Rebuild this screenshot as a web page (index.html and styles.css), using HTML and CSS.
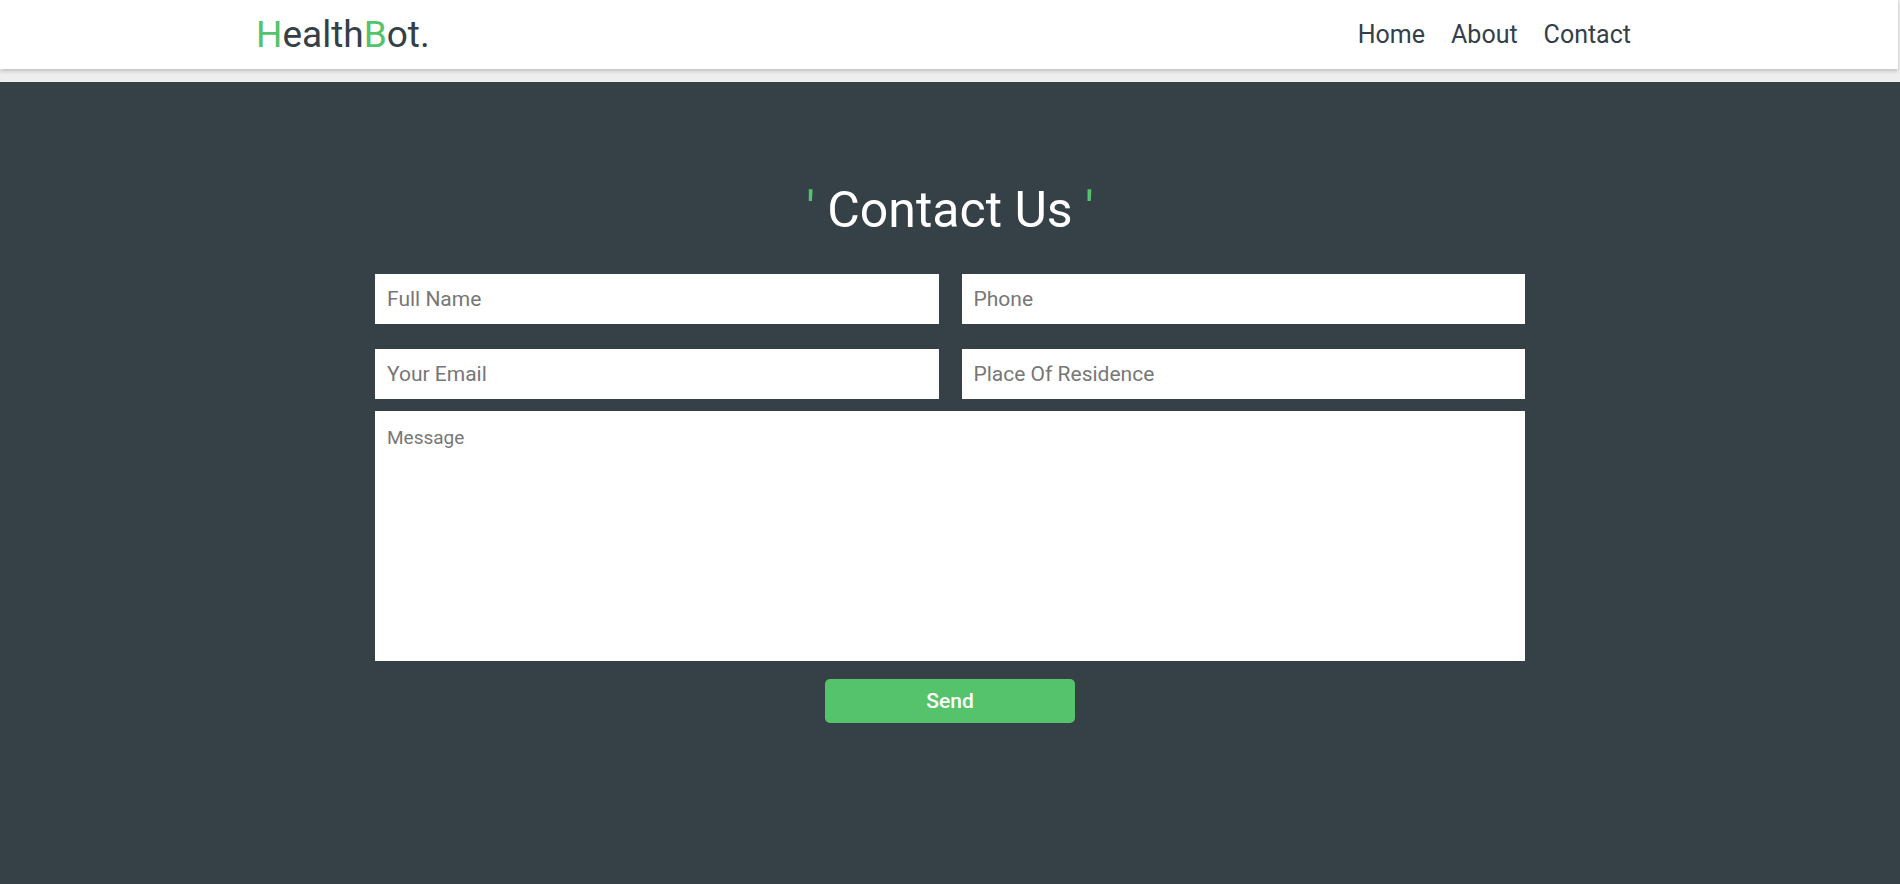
FILE: index.html
```html
<!DOCTYPE html>
<html lang="en">
<head>
    <meta charset="UTF-8">
    <meta name="viewport" content="width=device-width, initial-scale=1.0">
    <title>HealthBot - Contact</title>
    <link rel="stylesheet" href="styles.css">
</head>
<body>

    <header class="header">
        <div class="container header-inner">
            <a class="logo" href="#"><span class="green">H</span>ealth<span class="green">B</span>ot.</a>
            <nav class="nav">
                <a href="#">Home</a>
                <a href="#">About</a>
                <a href="#">Contact</a>
            </nav>
        </div>
    </header>

    <section class="contact">
        <h1 class="contact-title"><span class="green">'</span> Contact Us <span class="green">'</span></h1>

        <form class="contact-form">
            <div class="row">
                <input type="text" placeholder="Full Name">
                <input type="text" placeholder="Phone">
            </div>
            <div class="row">
                <input type="email" placeholder="Your Email">
                <input type="text" placeholder="Place Of Residence">
            </div>
            <textarea placeholder="Message"></textarea>
            <button type="button" class="send">Send</button>
        </form>
    </section>

</body>
</html>
```

FILE: styles.css
```css
* {
    box-sizing: border-box;
}

body {
    font-family: Roboto, "Liberation Sans", sans-serif;
    background: #eeeeee;
    margin: 0;
    padding: 0;
}

.green {
    color: #55c36b;
}

.container {
    max-width: 1420px;
    margin: 0 auto;
    padding: 0 15px;
}

.header {
    background: white;
    height: 69px;
    margin-right: 2px;
    margin-bottom: 13px;
    box-shadow: 0 2px 4px rgba(0,0,0,0.2);
}

.header-inner {
    display: flex;
    align-items: center;
    justify-content: space-between;
    height: 100%;
}

.logo {
    font-size: 37px;
    color: #343f48;
    text-decoration: none;
    margin-left: 2px;
}

.nav {
    display: flex;
}

.nav a {
    font-size: 25px;
    color: #343f48;
    text-decoration: none;
    padding: 0 13px;
}

.contact {
    background: #364047;
    padding: 99px 0 162px;
}

.contact-title {
    margin: 0 0 35px;
    font-size: 50px;
    font-weight: 400;
    color: white;
    text-align: center;
    line-height: normal;
}

.contact-form {
    width: 1150px;
    margin: 0 auto;
    display: flex;
    flex-direction: column;
    align-items: center;
}

.row {
    width: 100%;
    display: grid;
    grid-template-columns: 1fr 1fr;
    column-gap: 23px;
    margin-bottom: 25px;
}

.row + .row {
    margin-bottom: 12px;
}

input, textarea {
    font-family: inherit;
    border: none;
    outline: none;
    background: white;
    color: #333;
}

input {
    font-size: 21px;
    height: 50px;
    padding: 0 12px;
}

textarea {
    display: block;
    width: 100%;
    height: 250px;
    font-size: 19px;
    padding: 15px 12px;
    resize: none;
    margin-bottom: 18px;
}

input::placeholder, textarea::placeholder {
    color: #777;
}

.send {
    width: 250px;
    height: 44px;
    background: #55c36b;
    color: white;
    border: none;
    border-radius: 5px;
    font-family: inherit;
    font-size: 21px;
    font-weight: 500;
    cursor: pointer;
}

.send:hover {
    background: #4bb560;
}
```
